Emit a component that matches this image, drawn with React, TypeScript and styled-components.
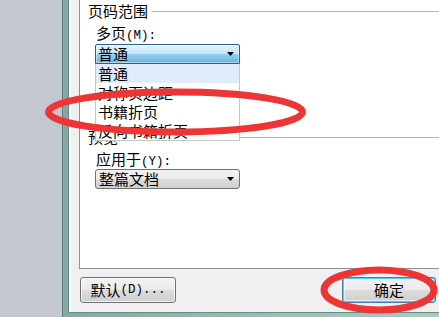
import React from "react";
import styled, { createGlobalStyle, css } from "styled-components";

const Global = createGlobalStyle`
  html, body { margin: 0; padding: 0; width: 439px; height: 317px; overflow: hidden; background: #c4c8d0; }
  #root { width: 439px; height: 317px; }
  * { box-sizing: border-box; }
`;

const Screen = styled.div`
  position: relative;
  display: flex;
  width: 439px;
  height: 317px;
  background: #c4c8d0;
  font-family: "Noto Sans CJK SC", sans-serif;
  font-size: 15px;
  color: #000;
  overflow: hidden;
`;

const Desktop = styled.div`
  width: 62px;
  flex: none;
  background: #c3c7cf;
`;

const Frame = styled.div`
  flex: 1;
  display: flex;
  border-left: 1px solid #5f7c78;
  padding: 0 0 4px 5px;
  background: linear-gradient(90deg, #86a8a2, #9dbfb8 60%, #a9c9c1);
`;

const DialogBody = styled.div`
  flex: 1;
  display: flex;
  flex-direction: column;
  border-left: 1px solid #6c8a85;
  border-bottom: 1px solid #6c8a85;
  box-shadow: inset 2px 0 0 #fafafa;
  background: #f0f0f0;
  padding-left: 10px;
`;

const TabPage = styled.div`
  height: 269px;
  flex: none;
  display: flex;
  flex-direction: column;
  background: #fff;
  border-left: 1px solid #8e9197;
  border-bottom: 1px solid #8e9197;
  padding-left: 8px;
`;

const SectionHeader = styled.div<{ $top?: number }>`
  display: flex;
  align-items: center;
  gap: 4px;
  height: 22px;
  margin-top: ${(p) => p.$top ?? 0}px;
  line-height: 22px;
  white-space: nowrap;
  &::after {
    content: "";
    flex: 1;
    height: 1px;
    background: #b3b3b3;
  }
`;

const Field = styled.div`
  display: flex;
  flex-direction: column;
  padding-left: 7px;
`;

const FieldLabel = styled.div<{ $h: number }>`
  height: ${(p) => p.$h}px;
  line-height: ${(p) => p.$h}px;
  padding-left: 1px;
  white-space: nowrap;
`;

const Latin = styled.span`
  font-family: "Liberation Mono", monospace;
  font-size: 12.5px;
`;

const ComboWrap = styled.div`
  position: relative;
  width: 145px;
`;

const Combo = styled.div<{ $open?: boolean }>`
  display: flex;
  align-items: center;
  justify-content: space-between;
  height: 20px;
  padding: 0 5px 0 3px;
  border: 1px solid #707070;
  border-radius: 3px;
  line-height: 18px;
  background: linear-gradient(#f2f2f2 0%, #ebebeb 50%, #dddddd 50%, #cfcfcf 100%);
  ${(p) =>
    p.$open &&
    css`
      border-color: #2c628b;
      border-radius: 2px 2px 0 0;
      padding-left: 2px;
      background: linear-gradient(#e5f4fc 0%, #c4e5f6 50%, #98d1ef 50%, #68b3db 100%);
      box-shadow: inset 0 0 0 1px rgba(255, 255, 255, 0.45);
    `}
`;

const Arrow = () => (
  <svg width="7" height="4" viewBox="0 0 7 4">
    <path d="M0 0 H7 L3.5 4 Z" fill="#000" />
  </svg>
);

const DropList = styled.ul`
  position: absolute;
  top: 100%;
  left: 0;
  width: 145px;
  margin: 0;
  padding: 0;
  list-style: none;
  background: #fff;
  border: 1px solid #c7c7c7;
  border-top: none;
  z-index: 2;
`;

const DropItem = styled.li<{ $active?: boolean }>`
  height: 19px;
  line-height: 19px;
  padding-left: 2px;
  white-space: nowrap;
  background: ${(p) => (p.$active ? "#e1ecfa" : "#fff")};
`;

const ButtonRow = styled.div`
  display: flex;
  justify-content: space-between;
  margin-top: 8px;
  padding: 0 3px 0 1px;
`;

const Button = styled.div<{ $w: number; $focused?: boolean }>`
  width: ${(p) => p.$w}px;
  height: 26px;
  display: flex;
  align-items: center;
  justify-content: center;
  border: 1px solid #707070;
  border-radius: 3px;
  line-height: 24px;
  white-space: nowrap;
  background: linear-gradient(#f2f2f2 0%, #ebebeb 50%, #dddddd 50%, #cfcfcf 100%);
  box-shadow: inset 0 0 0 1px rgba(255, 255, 255, 0.7);
  ${(p) =>
    p.$focused &&
    css`
      border-color: #3c7fb1;
      box-shadow: inset 0 0 0 1px #48d1f8, inset 0 0 0 2px rgba(255, 255, 255, 0.5);
    `}
`;

const Annotations = styled.svg`
  position: absolute;
  left: 0;
  top: 0;
  width: 439px;
  height: 317px;
  pointer-events: none;
  z-index: 5;
`;

export default function App() {
  return (
    <>
      <Global />
      <Screen>
        <Desktop />
        <Frame>
          <DialogBody>
            <TabPage>
              <SectionHeader>页码范围</SectionHeader>
              <Field>
                <FieldLabel $h={22}>
                  多页<Latin>(M):</Latin>
                </FieldLabel>
                <ComboWrap>
                  <Combo $open>
                    <span>普通</span>
                    <Arrow />
                  </Combo>
                  <DropList>
                    <DropItem $active>普通</DropItem>
                    <DropItem>对称页边距</DropItem>
                    <DropItem>书籍折页</DropItem>
                    <DropItem>反向书籍折页</DropItem>
                  </DropList>
                </ComboWrap>
              </Field>
              <SectionHeader $top={62}>预览</SectionHeader>
              <Field>
                <FieldLabel $h={21}>
                  应用于<Latin>(Y):</Latin>
                </FieldLabel>
                <ComboWrap>
                  <Combo>
                    <span>整篇文档</span>
                    <Arrow />
                  </Combo>
                </ComboWrap>
              </Field>
            </TabPage>
            <ButtonRow>
              <Button $w={96}>
                默认<Latin>(D)...</Latin>
              </Button>
              <Button $w={94} $focused>
                确定
              </Button>
            </ButtonRow>
          </DialogBody>
        </Frame>
        <Annotations viewBox="0 0 439 317">
          <ellipse cx="175.5" cy="112" rx="127" ry="20" fill="none" stroke="#ee3535" strokeWidth="7" />
          <ellipse cx="379" cy="290" rx="55" ry="20" fill="none" stroke="#ee3535" strokeWidth="7" />
        </Annotations>
      </Screen>
    </>
  );
}
